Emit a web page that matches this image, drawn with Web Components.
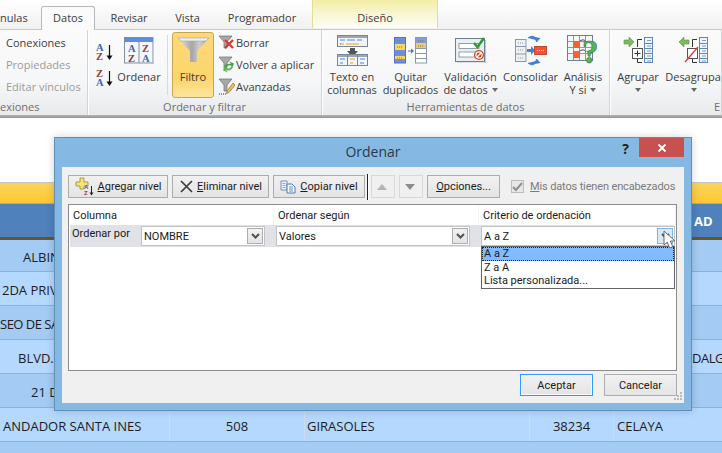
<!DOCTYPE html>
<html lang="es">
<head>
<meta charset="utf-8">
<title>Ordenar</title>
<style>
html, body { margin: 0; padding: 0; background: #fff; }
body { width: 722px; height: 453px; overflow: hidden; position: relative; font-family: "Open Sans", "Noto Sans", sans-serif; }
</style>
</head>
<body>
<xl-ribbon>
  <xl-tab style="width:41px;justify-content:flex-start">nulas</xl-tab>
  <xl-tab active style="width:54px">Datos</xl-tab>
  <xl-tab style="width:68px">Revisar</xl-tab>
  <xl-tab style="width:49px">Vista</xl-tab>
  <xl-tab style="width:100px">Programador</xl-tab>
  <xl-tab context style="width:126px">Diseño</xl-tab>

  <xl-group slot="groups" label="exiones" style="width:88px" label-align="left">
    <xl-stack style="padding-left:6px;margin-top:-1px">
      <xl-small>Conexiones</xl-small>
      <xl-small disabled>Propiedades</xl-small>
      <xl-small disabled>Editar vínculos</xl-small>
    </xl-stack>
  </xl-group>

  <xl-group slot="groups" label="Ordenar y filtrar" style="width:234px">
    <xl-stack style="padding:10px 0 0 8px;width:18px;justify-content:space-between;height:46px">
      <xl-icon name="sortaz"></xl-icon>
      <xl-icon name="sortza"></xl-icon>
    </xl-stack>
    <xl-big style="width:50px" icon="sortgrid">Ordenar</xl-big>
    <xl-sep></xl-sep>
    <xl-big style="width:42px" icon="funnel" active>Filtro</xl-big>
    <xl-stack style="padding-left:3px;margin-top:-1px">
      <xl-small icon="clear">Borrar</xl-small>
      <xl-small icon="reapply">Volver a aplicar</xl-small>
      <xl-small icon="advanced">Avanzadas</xl-small>
    </xl-stack>
  </xl-group>

  <xl-group slot="groups" label="Herramientas de datos" style="width:288px">
    <xl-big style="width:60px" icon="textcols">Texto en<br>columnas</xl-big>
    <xl-big style="width:57px" icon="dups">Quitar<br>duplicados</xl-big>
    <xl-big style="width:63px" icon="validate">Validación<br>de datos <xl-caret></xl-caret></xl-big>
    <xl-big style="width:57px" icon="consolidate">Consolidar</xl-big>
    <xl-big style="width:48px" icon="whatif">Análisis<br>Y si <xl-caret></xl-caret></xl-big>
  </xl-group>

  <xl-group slot="groups" label="E" style="width:112px" label-align="right">
    <xl-big style="width:56px" icon="group">Agrupar<br><xl-caret></xl-caret></xl-big>
    <xl-big style="width:54px" icon="ungroup">Desagrupa<br><xl-caret></xl-caret></xl-big>
  </xl-group>
</xl-ribbon>

<xl-sheet>
  <xl-row head><xl-cell></xl-cell><xl-cell></xl-cell><xl-cell></xl-cell><xl-cell></xl-cell><xl-cell pad="80"><b>AD</b></xl-cell></xl-row>
  <xl-row style="height:32px"><xl-cell pad="23">ALBIN</xl-cell><xl-cell></xl-cell><xl-cell></xl-cell><xl-cell></xl-cell><xl-cell></xl-cell></xl-row>
  <xl-row light><xl-cell pad="2">2DA PRIV</xl-cell><xl-cell></xl-cell><xl-cell></xl-cell><xl-cell></xl-cell><xl-cell></xl-cell></xl-row>
  <xl-row><xl-cell pad="0" style="letter-spacing:-.5px">SEO DE SA</xl-cell><xl-cell></xl-cell><xl-cell></xl-cell><xl-cell></xl-cell><xl-cell></xl-cell></xl-row>
  <xl-row light><xl-cell pad="18">BLVD.</xl-cell><xl-cell></xl-cell><xl-cell></xl-cell><xl-cell></xl-cell><xl-cell pad="78" style="letter-spacing:-.5px">DALG</xl-cell></xl-row>
  <xl-row><xl-cell pad="31">21 D</xl-cell><xl-cell></xl-cell><xl-cell></xl-cell><xl-cell></xl-cell><xl-cell></xl-cell></xl-row>
  <xl-row light><xl-cell pad="3">ANDADOR SANTA INES</xl-cell><xl-cell center>508</xl-cell><xl-cell pad="2">GIRASOLES</xl-cell><xl-cell center>38234</xl-cell><xl-cell pad="3">CELAYA</xl-cell></xl-row>
  <xl-row style="height:11px;border:0"></xl-row>
</xl-sheet>

<xl-dialog heading="Ordenar">
  <xl-button slot="tools" style="width:100px" icon="addlevel"><u>A</u>gregar nivel</xl-button>
  <xl-button slot="tools" style="width:97px" icon="x"><u>E</u>liminar nivel</xl-button>
  <xl-button slot="tools" style="width:92px" icon="copy"><u>C</u>opiar nivel</xl-button>
  <xl-toolsep slot="tools"></xl-toolsep>
  <xl-button slot="tools" style="width:24px" disabled icon="up"></xl-button>
  <xl-button slot="tools" style="width:24px" disabled icon="down"></xl-button>
  <xl-button slot="tools" style="width:73px"><u>O</u>pciones...</xl-button>
  <xl-check slot="tools"><u>M</u>is datos tienen encabezados</xl-check>

  <xl-combo slot="first" style="width:124px">NOMBRE</xl-combo>
  <xl-combo slot="second" style="width:194px">Valores</xl-combo>
  <xl-combo slot="third" style="width:194px" open>A a Z
    <xl-option slot="options" selected>A a Z</xl-option>
    <xl-option slot="options">Z a A</xl-option>
    <xl-option slot="options">Lista personalizada...</xl-option>
  </xl-combo>

  <xl-button slot="actions" style="width:73px;height:22px" primary>Aceptar</xl-button>
  <xl-button slot="actions" style="width:73px;height:22px">Cancelar</xl-button>
</xl-dialog>

<script>
// shared gradient bits so the icon table stays readable
var serif = 'font-family="Liberation Serif, serif" font-weight="700"';
var smallFunnel = '<path d="M1 2H14L9 8V14H6V8Z" fill="#a9a9a9" stroke="#6d6d6d" stroke-width=".7"/>';

var icons = {
  sortaz: [18, 20, `<text x="0" y="9" font-size="10.5" ${serif} fill="#3f66ad">A</text><text x="0" y="18" font-size="10.5" ${serif} fill="#8e3d3d">Z</text><path d="M13.5 3V15" stroke="#111" stroke-width="1.2"/><path d="M10.5 13.5H16.5L13.5 18Z" fill="#111"/>`],
  sortza: [18, 20, `<text x="0" y="9" font-size="10.5" ${serif} fill="#8e3d3d">Z</text><text x="0" y="18" font-size="10.5" ${serif} fill="#3f66ad">A</text><path d="M13.5 3V15" stroke="#111" stroke-width="1.2"/><path d="M10.5 13.5H16.5L13.5 18Z" fill="#111"/>`],
  sortgrid: [30, 27, `<rect x=".5" y=".5" width="28.5" height="25.5" fill="#f4f6fa" stroke="#7f8fa6"/><rect x="1" y="1" width="28" height="4" fill="#5b8fdc"/><path d="M15 5V26" stroke="#7f8fa6"/><path d="M29.5 3V27H2" stroke="#c9ccd2" fill="none"/><text x="4" y="15" font-size="10.5" ${serif} fill="#3f66ad">A</text><text x="18" y="15" font-size="10.5" ${serif} fill="#8e3d3d">Z</text><text x="4" y="25" font-size="10.5" ${serif} fill="#8e3d3d">Z</text><text x="18" y="25" font-size="10.5" ${serif} fill="#3f66ad">A</text>`],
  funnel: [31, 26, `<defs><linearGradient id="f" x1="0" x2="1" y1="0" y2="0"><stop offset="0" stop-color="#e6e6e6"/><stop offset=".45" stop-color="#a6a6a6"/><stop offset=".7" stop-color="#cfcfcf"/><stop offset="1" stop-color="#949494"/></linearGradient></defs><path d="M0 1H31L19 14V25H12V14Z" fill="url(#f)"/><path d="M0 1H31L28 4H3Z" fill="#f0f0f0" stroke="#a4a4a4" stroke-width=".6"/>`],
  clear: [17, 16, `${smallFunnel}<path d="M7 6L15 14M15 6L7 14" stroke="#e0352b" stroke-width="2.4"/>`],
  reapply: [17, 18, `${smallFunnel}<path d="M6 12C7 9 10 8 13 9L11 6.5L16 8.5L14 13L13 10.5C11 10 9 10.5 8 13Z" fill="#3da33c"/><path d="M15 12C14 15 11 16 8 15L10 17.5L5 15.5L7 11.5L8 13.5C10 14 12 13.5 13 12Z" fill="#5fb55a"/>`],
  advanced: [17, 18, `${smallFunnel}<path d="M9 14L15 6L17 8L11 15.5L8.5 16.5Z" fill="#f0c060" stroke="#8a6b2e" stroke-width=".7"/><path d="M1 17H8" stroke="#333" stroke-dasharray="1 1"/>`],
  textcols: [31, 31, `<rect x=".5" y=".5" width="30" height="11" fill="#f3f4f8" stroke="#75879a"/><rect x="1" y="1" width="29" height="2" fill="#9aa6b2"/><path d="M3 5H8M10 5H18M20 5H25" stroke="#4a86e0"/><path d="M3 9H7M9 9H22" stroke="#f09a20"/><path d="M3 9H4" stroke="#4a86e0"/><path d="M13 13H18V16H21L15.5 22L10 16H13Z" fill="#555"/><rect x=".5" y="19.5" width="30" height="11" fill="#f3f4f8" stroke="#75879a"/><rect x="1" y="20" width="29" height="2" fill="#9aa6b2"/><path d="M10.500 20V30M20.500 20V30" stroke="#75879a"/><path d="M3 24H8M3 28H6M23 24H28M23 28H27" stroke="#4a86e0"/><path d="M13 24H18M13 28H16" stroke="#f09a20"/>`],
  dups: [33, 27, `<rect x=".5" y=".5" width="11" height="25.500" fill="#6f8edb" stroke="#5a72b8"/><rect x="1" y="7" width="10" height="6" fill="#f7d662"/><rect x="1" y="19" width="10" height="3" fill="#f7d662"/><rect x="1" y="15" width="10" height="2" fill="#6f8edb"/><path d="M3 4H9M3 10H9M3 16H9M3 21H9" stroke="#8d7a4f" stroke-dasharray="1 1"/><path d="M14 14H18" stroke="#4a76c8"/><path d="M17 11.500L20 14L17 16.500Z" fill="#4a76c8"/><rect x="21.500" y=".5" width="11" height="25.500" fill="#fff" stroke="#8b98a8"/><rect x="22" y="1" width="10" height="5" fill="#7f9ee0"/><rect x="22" y="6" width="10" height="5" fill="#f3c869"/><path d="M22 11.500H32M22 16.500H32M22 21.500H32" stroke="#8b98a8"/><path d="M24 4H30M24 9H30" stroke="#80704a" stroke-dasharray="1 1"/>`],
  validate: [31, 26, `<rect x=".5" y="1.500" width="29" height="23" fill="#eaeff4" stroke="#6d8092"/><path d="M30.500 3V26H2" stroke="#c3c7cc" fill="none"/><rect x="4" y="6.500" width="20" height="5" fill="#fff" stroke="#7c8a98" stroke-width=".8"/><rect x="4" y="15" width="20" height="5" fill="#fff" stroke="#7c8a98" stroke-width=".8"/><path d="M19 6L22.500 10L29 1" fill="none" stroke="#2f9a30" stroke-width="2.600"/><circle cx="24" cy="18" r="5" fill="#d8401f"/><path d="M21.500 20.500L26.500 15.500" stroke="#fff" stroke-width="1.500"/><circle cx="24" cy="18" r="3.100" fill="none" stroke="#fff" stroke-width="1.200"/>`],
  consolidate: [32, 31, `<rect x=".5" y="4.500" width="10.500" height="22" fill="#eef1f4" stroke="#8b98a8"/><path d="M1 11.500H11M1 19H11" stroke="#8b98a8"/><path d="M3 8H9M3 15H9M3 23H9" stroke="#8a97a5" stroke-dasharray="1 1"/><path d="M12 14H16V11L20 15.500L16 20V17H12Z" fill="#3f7fd8"/><rect x="19.500" y="11.500" width="12" height="8" fill="#f1523a" stroke="#c04a32"/><path d="M22 15.500H29" stroke="#ffd0c0" stroke-dasharray="1 1"/><path d="M13 3C17 0 20 1 21 5M20 2L21.500 7L25 3" fill="#3f7fd8" stroke="#3f7fd8"/><path d="M13 28C17 31 20 30 21 26M20 29L21.500 24L25 28" fill="#3f7fd8" stroke="#3f7fd8"/>`],
  whatif: [32, 30, `<rect x=".5" y=".5" width="25" height="25" fill="#f4f6f8" stroke="#6f7f8e"/><path d="M6.500 1V25M12.500 1V25M18.500 1V25M1 6.500H25M1 12.500H25M1 18.500H25" stroke="#8d99a5"/><rect x="6" y="6" width="7" height="7" fill="#f4622f"/><rect x="6" y="16" width="7" height="7" fill="#f4622f"/><path d="M13 6C16 4 18 5 19 7M13 16C16 14 18 15 19 17" fill="none" stroke="#444"/><text x="15" y="28" font-size="33" ${serif} fill="#5fae5f" stroke="#2f7f3f" stroke-width=".6">?</text>`],
  group: [31, 28, `<path d="M1 4H6V1L11 6L6 11V8H1Z" fill="#7cba5c" stroke="#5d9440" stroke-width=".6"/><path d="M19 3.500H14.500V11M14.500 23V26.500H19" fill="none" stroke="#333"/><rect x="9.500" y="12.500" width="10" height="10" fill="#fff" stroke="#555"/><path d="M11.500 17.500H17.500M14.500 14.500V20.500" stroke="#333"/><rect x="21.500" y="1.500" width="8" height="25" fill="#f2f6fb" stroke="#6487b2"/><path d="M22 7.500H29M22 12.500H29M22 17.500H29M22 22.500H29" stroke="#6487b2"/><path d="M24 4.500H28M24 10H28M24 15H28M24 20H28M24 25H28" stroke="#6ea0de"/>`],
  ungroup: [31, 28, `<path d="M11 4H6V1L1 6L6 11V8H11Z" fill="#7cba5c" stroke="#5d9440" stroke-width=".6"/><path d="M19 3.500H14.500V11M14.500 23V26.500H19" fill="none" stroke="#333"/><rect x="9.500" y="12.500" width="10" height="10" fill="#fff" stroke="#555"/><path d="M7 26L20 11" stroke="#e23a3a" stroke-width="1.300"/><rect x="21.500" y="1.500" width="8" height="25" fill="#f2f6fb" stroke="#6487b2"/><path d="M22 7.500H29M22 12.500H29M22 17.500H29M22 22.500H29" stroke="#6487b2"/><path d="M24 4.500H28M24 10H28M24 15H28M24 20H28M24 25H28" stroke="#6ea0de"/>`],
  addlevel: [20, 19, `<path d="M5 1H9V5H13V9H9V12H5V9H1V5H5Z" fill="#f6e27a" stroke="#9a8a3a" stroke-width=".8"/><text x="9" y="12" font-size="6" font-family="Liberation Sans" font-weight="700" fill="#3f66ad">A</text><text x="9" y="18" font-size="6" font-family="Liberation Sans" font-weight="700" fill="#8e3d3d">Z</text><path d="M16.500 9V17" stroke="#222"/><path d="M14.500 15.500H18.500L16.500 18.500Z" fill="#222"/>`],
  x: [15, 15, `<path d="M2 2L13 13M13 2L2 13" stroke="#3c3c3c" stroke-width="1.700" fill="none"/>`],
  copy: [17, 14, `<path d="M1 1H7V10H1Z" fill="#eef3fb" stroke="#6f8fc2"/><path d="M7 4H12L15 7V13H7Z" fill="#f7faff" stroke="#4f78b8"/><path d="M9 7H13M9 9H13M9 11H13" stroke="#6f8fc2"/><path d="M2.500 3.500H5.500M2.500 5.500H5.500M2.500 7.500H5.500" stroke="#8fa8cf"/>`],
  up: [10, 6, `<path d="M5 0L10 6H0Z" fill="#b5b5b5"/>`],
  down: [10, 6, `<path d="M0 0H10L5 6Z" fill="#8d8d8d"/>`],
  chevron: [9, 6, `<path d="M1 1L4.500 4.500L8 1" fill="none" stroke="#505050" stroke-width="2"/>`],
  check: [11, 10, `<path d="M1 5L4 8L10 1" fill="none" stroke="#8f8f8f" stroke-width="2"/>`]
};

class XlIcon extends HTMLElement {
  connectedCallback() {
    var [w, h, body] = icons[this.getAttribute("name")];
    var root = this.shadowRoot || this.attachShadow({ mode: "open" });
    root.innerHTML = `<style>:host{display:block;line-height:0}</style><svg width="${w}" height="${h}" viewBox="0 0 ${w} ${h}">${body}</svg>`;
  }
}

class XlRibbon extends HTMLElement {
  constructor() {
    super();
    this.attachShadow({ mode: "open" }).innerHTML = `
<style>
:host { display: block; height: 118px; font-size: 11px; color: #3b3b3b; font-family: "Open Sans", sans-serif; }
.tabs { display: flex; height: 30px; background: linear-gradient(#fff, #f6f6f6 60%, #f1f1f1); box-sizing: border-box; border-bottom: 1px solid #c9c9c9; }
.groups { display: flex; height: 85px; background: linear-gradient(#fbfbfb, #f6f7f8 60%, #e9eaec); }
.rule { height: 3px; background: linear-gradient(#b6b8ba, #8f9194); }
</style>
<div class="tabs"><slot></slot></div>
<div class="groups"><slot name="groups"></slot></div>
<div class="rule"></div>`;
  }
}

class XlTab extends HTMLElement {
  constructor() {
    super();
    this.attachShadow({ mode: "open" }).innerHTML = `
<style>
:host { display: flex; flex: none; align-items: flex-end; justify-content: center; height: 30px; padding-bottom: 5px; box-sizing: border-box; white-space: nowrap; }
:host([active]) { height: 24px; margin-top: 6px; background: #fbfbfb; border: 1px solid #b8b9ba; border-bottom: 0; border-radius: 3px 3px 0 0; box-sizing: border-box; margin-bottom: -1px; position: relative; }
:host([context]) { height: 28px; background: linear-gradient(#f2eda3, #f9f7d8 55%, #fdfdf6); border-left: 1px solid #e4dc9a; border-right: 1px solid #e4dc9a; padding-bottom: 3px; }
</style><slot></slot>`;
  }
}

class XlGroup extends HTMLElement {
  constructor() {
    super();
    this.attachShadow({ mode: "open" }).innerHTML = `
<style>
:host { display: flex; flex-direction: column; flex: none; box-sizing: border-box; border-right: 1px solid #d2d3d5; box-shadow: 1px 0 0 #fff; }
.body { display: flex; height: 69px; padding-top: 2px; box-sizing: border-box; }
.label { height: 16px; line-height: 16px; text-align: center; color: #6d6e70; white-space: nowrap; }
:host([label-align=left]) .label { text-align: left; }
:host([label-align=right]) .label { text-align: right; padding-right: 1px; overflow: hidden; }
</style>
<div class="body"><slot></slot></div>
<div class="label"></div>`;
    this.shadowRoot.querySelector(".label").textContent = this.getAttribute("label");
  }
}

class XlStack extends HTMLElement {
  constructor() {
    super();
    this.attachShadow({ mode: "open" }).innerHTML = `
<style>:host { display: flex; flex-direction: column; flex: none; }</style><slot></slot>`;
  }
}

class XlSmall extends HTMLElement {
  constructor() {
    super();
    var name = this.getAttribute("icon");
    this.attachShadow({ mode: "open" }).innerHTML = `
<style>
:host { display: flex; align-items: center; height: 22px; white-space: nowrap; }
:host([disabled]) { color: #9b9b9b; }
.ico { width: 19px; display: flex; justify-content: center; flex: none; }
</style>${name ? `<span class="ico"><xl-icon name="${name}"></xl-icon></span>` : ""}<slot></slot>`;
  }
}

class XlBig extends HTMLElement {
  constructor() {
    super();
    this.attachShadow({ mode: "open" }).innerHTML = `
<style>
:host { display: flex; flex-direction: column; align-items: center; flex: none; height: 66px; box-sizing: border-box; white-space: nowrap; text-align: center; line-height: 13px; }
:host([active]) { background: linear-gradient(#fdd977, #fcd56c 70%, #fbe59c); border: 1px solid #c8a651; border-radius: 3px; }
.ico { display: flex; justify-content: center; align-items: center; flex: none; height: 34px; margin-top: 1px; }
:host([active]) .ico { margin-top: 0; }
.txt { margin-top: 3px; }
</style>
<span class="ico"><xl-icon name="${this.getAttribute("icon")}"></xl-icon></span>
<span class="txt"><slot></slot></span>`;
  }
}

class XlSep extends HTMLElement {
  constructor() {
    super();
    this.attachShadow({ mode: "open" }).innerHTML = `
<style>:host { display: block; flex: none; width: 1px; height: 60px; margin: 3px 4px 0 3px; background: #d9dadb; }</style>`;
  }
}

class XlCaret extends HTMLElement {
  constructor() {
    super();
    this.attachShadow({ mode: "open" }).innerHTML = `
<style>:host { display: inline-block; width: 0; height: 0; border: 3.5px solid transparent; border-top: 4px solid #6a6a6a; border-bottom: 0; vertical-align: 2px; margin-left: 1px; }</style>`;
  }
}

class XlSheet extends HTMLElement {
  constructor() {
    super();
    this.attachShadow({ mode: "open" }).innerHTML = `
<style>
:host { display: block; margin-top: 64px; border-top: 1px solid #c5c7c9; background: #fff; font-family: "Open Sans", sans-serif; font-size: 13px; color: #1c1c1c; }
.gold { height: 21px; background: linear-gradient(#fbd35c, #ffc833); border-bottom: 1px solid #e0a62c; box-sizing: border-box; }
</style><div class="gold"></div><slot></slot>`;
  }
}

class XlRow extends HTMLElement {
  constructor() {
    super();
    this.attachShadow({ mode: "open" }).innerHTML = `
<style>
:host { display: grid; grid-template-columns: 170px 135px 225px 84px 108px; height: 34px; box-sizing: border-box; background: #a3cbf3; border-bottom: 1px solid #82b3e8; padding-top: 2px; overflow: hidden; }
:host([light]) { background: #b5d8ff; }
:host([head]) { height: 36px; padding-top: 0; background: #4f81bd; border-bottom: 3px solid #6f5427; color: #fff; }
</style><slot></slot>`;
  }
}

class XlCell extends HTMLElement {
  constructor() {
    super();
    this.attachShadow({ mode: "open" }).innerHTML = `
<style>
:host { display: flex; align-items: center; overflow: hidden; white-space: nowrap; box-sizing: border-box; padding-left: var(--pad, 0); border-right: 1px solid #cbdcef; }
:host([center]) { justify-content: center; }
:host(:last-child) { border-right: 0; }
</style><slot></slot>`;
    if (this.hasAttribute("pad")) this.style.setProperty("--pad", this.getAttribute("pad") + "px");
  }
}

class XlDialog extends HTMLElement {
  constructor() {
    super();
    this.attachShadow({ mode: "open" }).innerHTML = `
<style>
:host { position: absolute; left: 54px; top: 137px; width: 638px; height: 274px; box-sizing: border-box; background: #85b9e4; border: 1px solid #5f90b5; box-shadow: 0 0 8px rgba(0,0,0,.18); font-family: Roboto, sans-serif; font-size: 11px; color: #1b1b1b; display: flex; flex-direction: column; padding: 0 7px 7px; }
.title { height: 29px; flex: none; display: flex; position: relative; align-items: center; justify-content: center; font-family: "Open Sans", sans-serif; font-size: 14px; color: #2a3a4a; padding-bottom: 2px; box-sizing: border-box; }
.help { position: absolute; right: 55px; top: 1px; font-weight: 700; font-size: 14px; color: #222; }
.close { position: absolute; right: 0; top: 0; width: 45px; height: 19px; background: #c75050; color: #fff; display: flex; align-items: center; justify-content: center; }
.panel { flex: 1; background: #f0f0f0; display: flex; flex-direction: column; padding: 8px 7px 7px 6px; position: relative; }
.tools { display: flex; align-items: center; gap: 4px; height: 23px; }
.list { margin-top: 6px; height: 167px; box-sizing: border-box; background: #fff; border: 1px solid #8c8c8c; }
.head { display: grid; grid-template-columns: 205px 205px 1fr; height: 20px; align-items: center; }
.head span { padding-left: 4px; border-right: 1px solid #f0f4f9; height: 100%; display: flex; align-items: center; box-sizing: border-box; }
.row { display: flex; align-items: center; height: 22px; margin: 0 2px 0 1px; background: #e1e1e8; }
.row .by { width: 71px; padding-left: 2px; box-sizing: border-box; padding-bottom: 5px; flex: none; }
.row ::slotted([slot=second]) { margin-left: 11px; }
.row ::slotted([slot=third]) { margin-left: 11px; }
.actions { display: flex; justify-content: flex-end; gap: 11px; margin-top: 3px; }
.grip { position: absolute; right: 1px; bottom: 2px; line-height: 0; }
</style>
<div class="title"><span>${this.getAttribute("heading")}</span><span class="help">?</span>
  <span class="close"><svg width="10" height="10" viewBox="0 0 10 10"><path d="M1.500 1.500L8.500 8.500M8.500 1.500L1.500 8.500" stroke="#fff" stroke-width="1.800"/></svg></span></div>
<div class="panel">
  <div class="tools"><slot name="tools"></slot></div>
  <div class="list">
    <div class="head"><span>Columna</span><span>Ordenar según</span><span>Criterio de ordenación</span></div>
    <div class="row"><span class="by">Ordenar por</span><slot name="first"></slot><slot name="second"></slot><slot name="third"></slot></div>
  </div>
  <div class="actions"><slot name="actions"></slot></div>
  <svg class="grip" width="9" height="9" viewBox="0 0 9 9"><path d="M6 0h2v2H6zM3 3h2v2H3zM6 3h2v2H6zM0 6h2v2H0zM3 6h2v2H3zM6 6h2v2H6z" fill="#b9b9b9"/></svg>
</div>`;
  }
}

class XlButton extends HTMLElement {
  constructor() {
    super();
    var name = this.getAttribute("icon");
    this.attachShadow({ mode: "open" }).innerHTML = `
<style>
:host { display: flex; flex: none; align-items: center; justify-content: center; gap: 3px; height: 23px; box-sizing: border-box; background: linear-gradient(#f1f1f1, #e4e4e4); border: 1px solid #acacac; white-space: nowrap; }
:host([primary]) { border: 1px solid #3399ff; box-shadow: inset 0 0 0 1px #f4f8fc; }
:host([disabled]) { background: #f0f0f0; border-color: #d9d9d9; }
</style>${name ? `<xl-icon name="${name}"></xl-icon>` : ""}<span><slot></slot></span>`;
  }
}

class XlToolsep extends HTMLElement {
  constructor() {
    super();
    this.attachShadow({ mode: "open" }).innerHTML = `
<style>:host { display: block; flex: none; width: 1px; height: 26px; background: #222; margin: 0 -1px 0 -2px; box-shadow: 1px 0 0 #fff; }</style>`;
  }
}

class XlCheck extends HTMLElement {
  constructor() {
    super();
    this.attachShadow({ mode: "open" }).innerHTML = `
<style>
:host { display: flex; flex: none; align-items: center; gap: 6px; margin-left: 7px; color: #7b7b7b; white-space: nowrap; letter-spacing: -.14px; }
.box { width: 13px; height: 13px; box-sizing: border-box; border: 1px solid #bdbdbd; background: #e7e7e7; display: flex; align-items: center; justify-content: center; }
</style><span class="box"><xl-icon name="check"></xl-icon></span><span><slot></slot></span>`;
  }
}

class XlCombo extends HTMLElement {
  constructor() {
    super();
    this.attachShadow({ mode: "open" }).innerHTML = `
<style>
:host { display: flex; flex: none; align-items: center; height: 20px; box-sizing: border-box; background: #fff; border: 1px solid #c3c3c3; padding-left: 2px; position: relative; white-space: nowrap; }
.text { flex: 1; }
.btn { width: 16px; height: 16px; margin-right: 1px; box-sizing: border-box; background: linear-gradient(#f1f1f1, #e4e4e4); border: 1px solid #acacac; display: flex; align-items: center; justify-content: center; }
:host([open]) .btn { background: #d8eafb; border-color: #7eb4ea; }
.menu { display: none; position: absolute; left: -1px; right: -1px; top: 19px; background: #fff; border: 1px solid #646464; z-index: 2; flex-direction: column; }
:host([open]) .menu { display: flex; }
.cursor { position: absolute; right: -3px; top: 3px; z-index: 3; line-height: 0; display: none; }
:host([open]) .cursor { display: block; }
</style>
<span class="text"><slot></slot></span>
<span class="btn"><xl-icon name="chevron"></xl-icon></span>
<div class="menu"><slot name="options"></slot></div>
<svg class="cursor" width="14" height="20" viewBox="0 0 14 20"><path d="M1 1V15L4.300 12.200L6.700 18L9.800 16.700L7.300 11H12Z" fill="#fff" stroke="#6a6a6a"/></svg>`;
  }
}

class XlOption extends HTMLElement {
  constructor() {
    super();
    this.attachShadow({ mode: "open" }).innerHTML = `
<style>
:host { display: block; height: 13.5px; line-height: 13.5px; padding-left: 2px; }
:host([selected]) { background: #80bcff; outline: 1px dotted #222; outline-offset: -1px; }
</style><slot></slot>`;
  }
}

customElements.define("xl-icon", XlIcon);
customElements.define("xl-ribbon", XlRibbon);
customElements.define("xl-tab", XlTab);
customElements.define("xl-group", XlGroup);
customElements.define("xl-stack", XlStack);
customElements.define("xl-small", XlSmall);
customElements.define("xl-big", XlBig);
customElements.define("xl-sep", XlSep);
customElements.define("xl-caret", XlCaret);
customElements.define("xl-sheet", XlSheet);
customElements.define("xl-row", XlRow);
customElements.define("xl-cell", XlCell);
customElements.define("xl-dialog", XlDialog);
customElements.define("xl-button", XlButton);
customElements.define("xl-toolsep", XlToolsep);
customElements.define("xl-check", XlCheck);
customElements.define("xl-combo", XlCombo);
customElements.define("xl-option", XlOption);
</script>
</body>
</html>
